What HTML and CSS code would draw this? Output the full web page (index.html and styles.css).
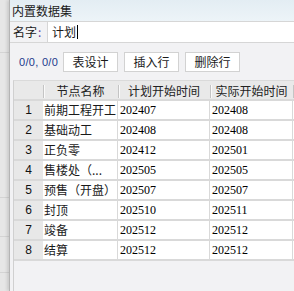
FILE: index.html
```html
<!DOCTYPE html>
<html lang="zh">
	<head>
		<meta charset="UTF-8" />
		<title>内置数据集</title>
		<link rel="stylesheet" href="styles.css">
	</head>
	<body>
		<div class="backdrop">
			<div class="bd-block" style="height: 53px"></div>
			<div class="bd-block" style="height: 145px"></div>
			<div class="bd-block" style="height: 39px"></div>
			<div class="bd-block" style="height: 36px"></div>
		</div>

		<div class="window">
			<div class="title-bar">内置数据集</div>

			<div class="name-row">
				<span class="name-label">名字<span class="colon">:</span></span>
				<div class="name-input">计划<span class="caret"></span></div>
			</div>

			<div class="toolbar">
				<span class="counter">0/0, 0/0</span>
				<button class="tool-button">表设计</button>
				<button class="tool-button">插入行</button>
				<button class="tool-button">删除行</button>
			</div>

			<div class="table-wrap">
				<div class="grid header">
					<div class="head-cell"></div>
					<div class="head-cell sep">节点名称</div>
					<div class="head-cell sep">计划开始时间</div>
					<div class="head-cell sep">实际开始时间</div>
					<div class="head-cell sep"></div>
				</div>
				<div class="grid body-rows" id="rows"></div>
				<div class="table-empty"></div>
			</div>
		</div>

		<script>
			// Data rows of the dataset
			const rows = [
				["前期工程开工", "202407", "202408"],
				["基础动工", "202408", "202408"],
				["正负零", "202412", "202501"],
				["售楼处（...", "202505", "202505"],
				["预售（开盘）", "202507", "202507"],
				["封顶", "202510", "202511"],
				["竣备", "202512", "202512"],
				["结算", "202512", "202512"],
			];

			const body = document.getElementById("rows");
			rows.forEach((r, i) => {
				body.innerHTML +=
					`<div class="cell row-num">${i + 1}</div>` +
					`<div class="cell name">${r[0]}</div>` +
					`<div class="cell date">${r[1]}</div>` +
					`<div class="cell date">${r[2]}</div>` +
					`<div class="cell rest"></div>`;
			});
		</script>
	</body>
</html>
```

FILE: styles.css
```css
* {
	margin: 0;
	padding: 0;
	box-sizing: border-box;
}
body {
	display: flex;
	width: 294px;
	height: 291px;
	overflow: hidden;
	background-color: #e6e6e6;
	font-family: "Noto Sans CJK SC", "Liberation Sans", sans-serif;
	font-size: 12px;
	color: #1a1a1a;
}
.backdrop {
	width: 9px;
	flex-shrink: 0;
	display: flex;
	flex-direction: column;
}
.bd-block {
	border-bottom: 1px solid #d4d4d4;
}
.window {
	flex: 1;
	display: flex;
	flex-direction: column;
	min-width: 0;
	background-color: #f2f2f4;
	border-left: 1px solid #b4b4b4;
	box-shadow: -2px 0 3px rgba(0, 0, 0, 0.12);
}
.title-bar {
	height: 22px;
	line-height: 21px;
	padding-left: 2px;
	background: linear-gradient(#e3edf3, #edf4f8);
	border-bottom: 1px solid #d6d6d6;
}
.name-row {
	display: flex;
	align-items: stretch;
	height: 21px;
	border-bottom: 1px solid #d6d6d6;
}
.name-label {
	width: 37px;
	padding-left: 3px;
	line-height: 20px;
}
.colon {
	color: #6b3fa0;
	padding-left: 1px;
}
.name-input {
	flex: 1;
	background-color: #fff;
	border-left: 1px solid #d6d6d6;
	padding-left: 4px;
	line-height: 20px;
	display: flex;
	align-items: center;
}
.caret {
	width: 1px;
	height: 14px;
	margin-left: 1px;
	background-color: #000;
}
.toolbar {
	display: flex;
	align-items: center;
	gap: 6px;
	height: 37px;
	padding: 0 0 0 9px;
}
.counter {
	font-family: "Liberation Sans", sans-serif;
	font-size: 11px;
	color: #1c3a8c;
	margin-right: -1px;
	letter-spacing: 0.3px;
}
.tool-button {
	width: 55px;
	height: 20px;
	background-color: #fff;
	border: 1px solid #d2d2d2;
	font-family: "Noto Sans CJK SC", sans-serif;
	font-size: 12px;
	color: #1a1a1a;
	line-height: 17px;
}
.table-wrap {
	flex: 1;
	margin-left: 3px;
	border-left: 1px solid #d0d0d0;
	border-top: 1px solid #dadada;
	display: flex;
	flex-direction: column;
}
.grid {
	display: grid;
	grid-template-columns: 29px 75px 92px 83px 1fr;
}
.head-cell {
	height: 20px;
	line-height: 20px;
	text-align: center;
	background-color: #e9e9e9;
	border-bottom: 2px solid #d9d9d9;
	color: #222;
}
.head-cell.sep {
	background:
		linear-gradient(#c4c4c4, #c4c4c4) 0 4px / 1px 13px no-repeat,
		linear-gradient(#fafafa, #fafafa) 1px 4px / 1px 13px no-repeat,
		#e9e9e9;
}
.cell {
	height: 20px;
	line-height: 18px;
	background-color: #fff;
	border-bottom: 2px solid #d9d9d9;
	border-right: 1px solid #d9d9d9;
	white-space: nowrap;
	overflow: hidden;
}
.row-num {
	background-color: #e8e8e8;
	text-align: center;
	font-family: "Liberation Sans", sans-serif;
	font-size: 12px;
	color: #111;
	border-right: none;
}
.name {
	padding-left: 1px;
	font-size: 12px;
}
.date {
	padding-left: 2px;
	font-family: "Liberation Serif", serif;
	font-size: 12px;
	color: #000;
}
.rest {
	border-right: none;
}
.table-empty {
	flex: 1;
}
```
